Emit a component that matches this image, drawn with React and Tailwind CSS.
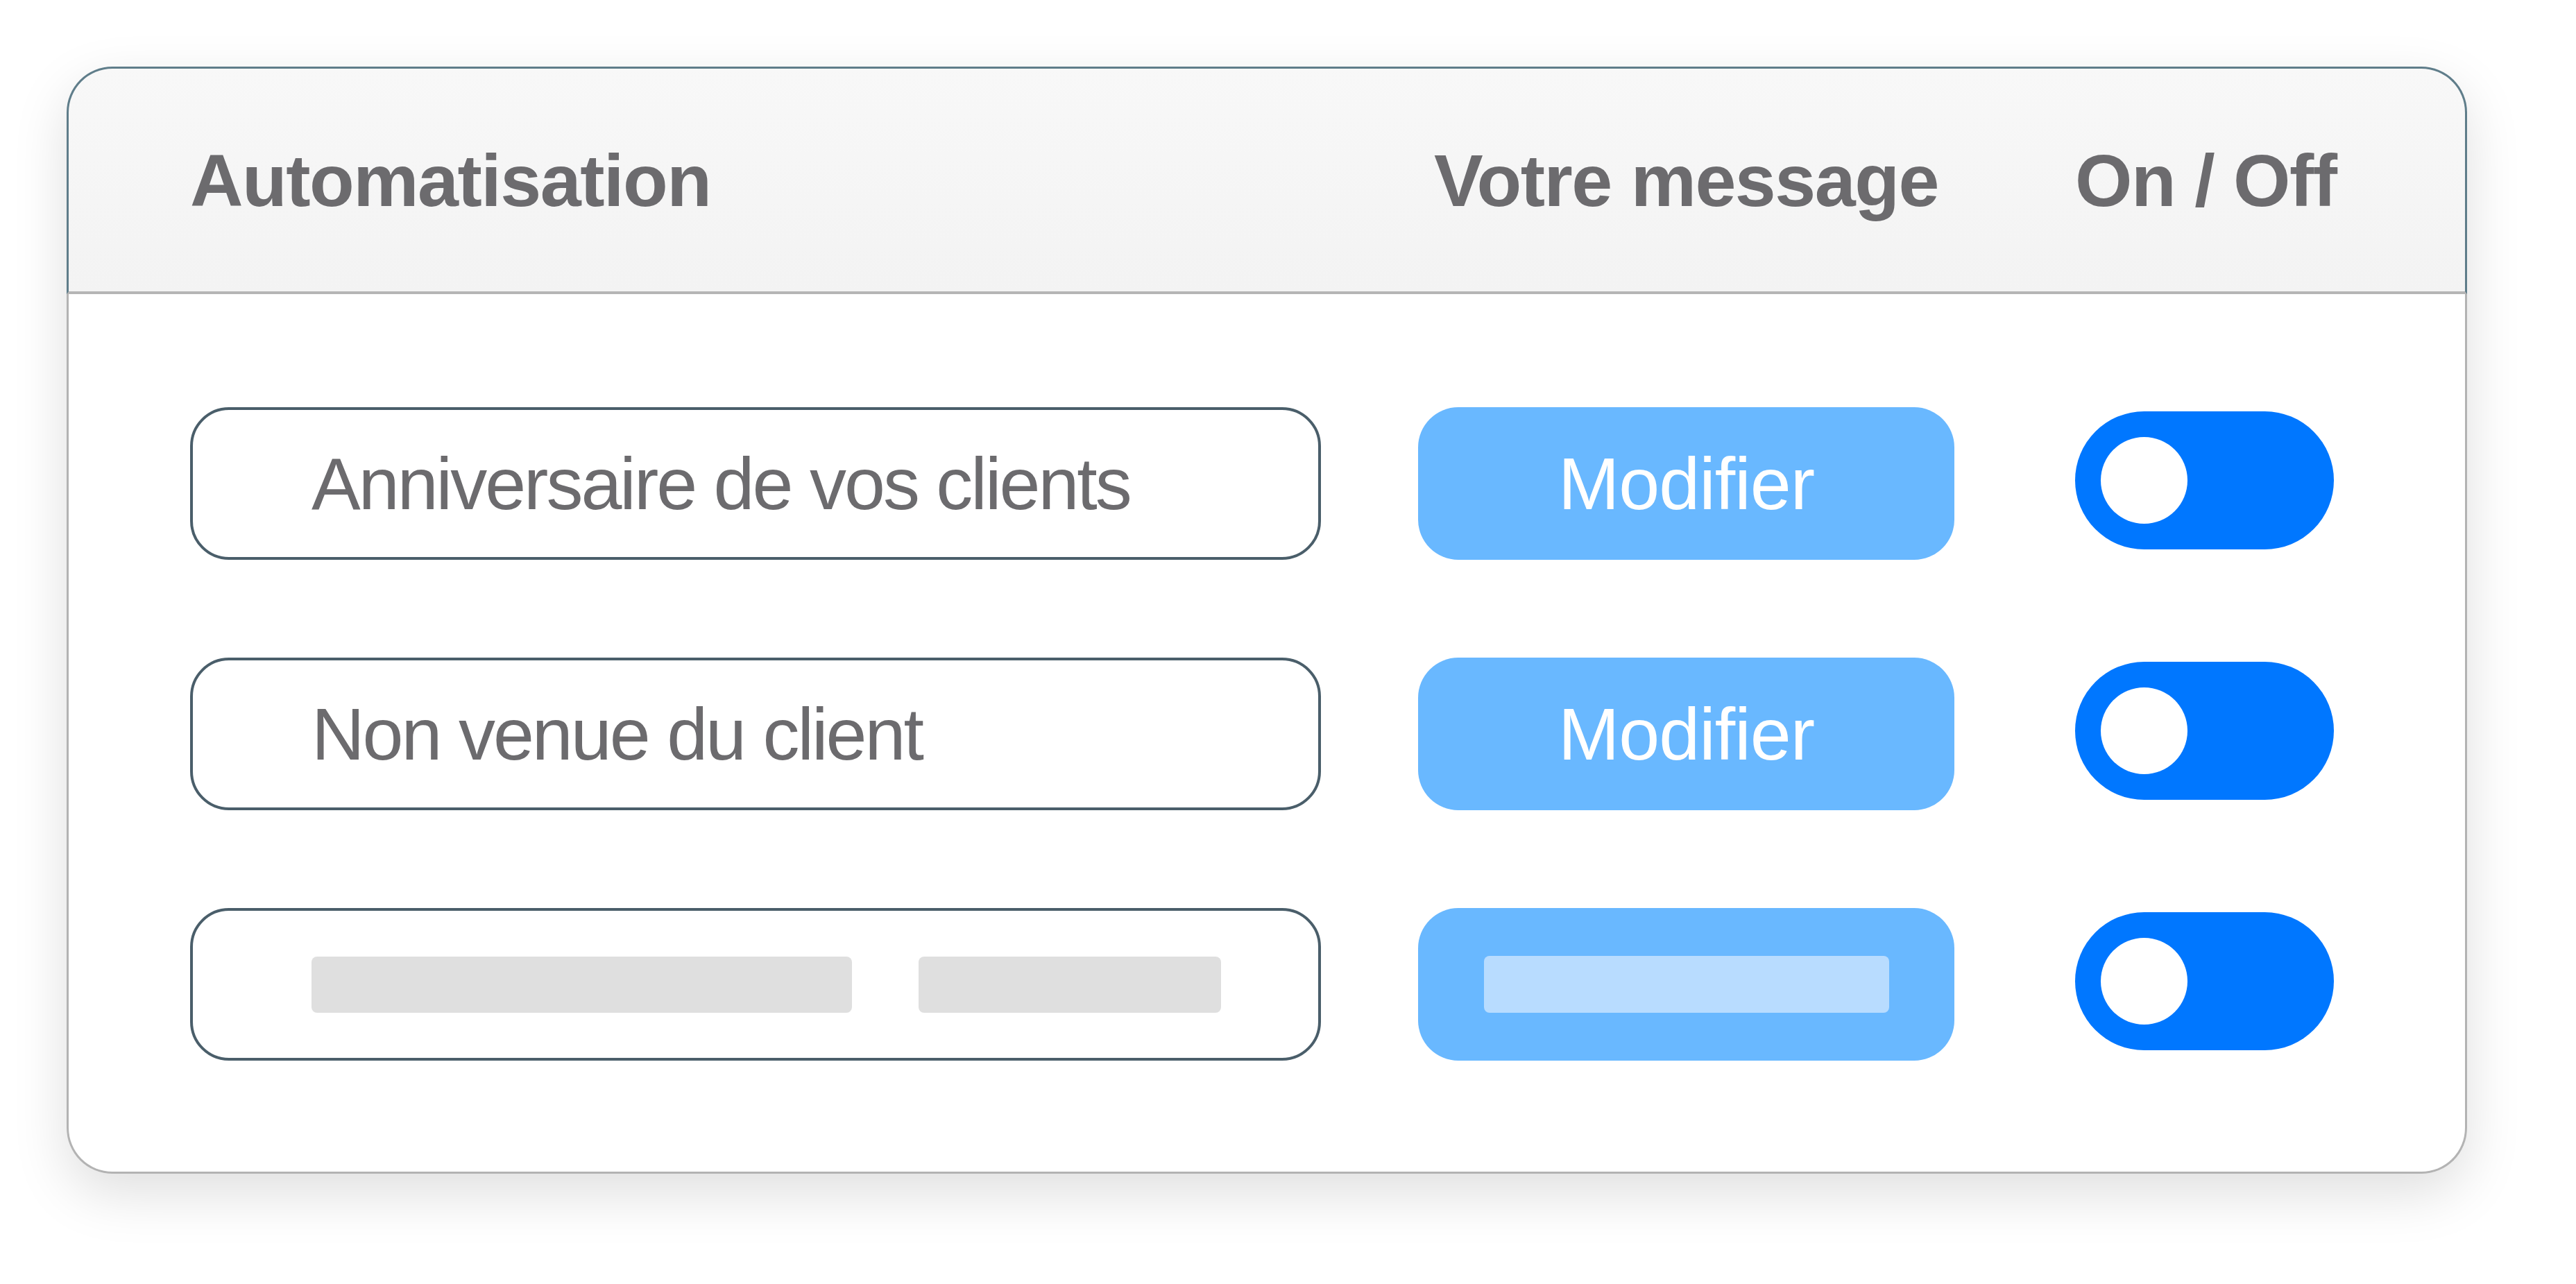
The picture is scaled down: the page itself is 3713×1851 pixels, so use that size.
import React from "react";

const rows = [
  { label: "Anniversaire de vos clients" },
  { label: "Non venue du client" },
  { label: null },
];

const font = { fontFamily: '"Liberation Sans", Arial, sans-serif' };

export default function App() {
  return (
    <div className="min-h-screen w-full bg-white pl-[96px] pt-[96px]" style={font}>
      <div className="w-[3460px] rounded-[66px] shadow-[0_28px_80px_rgba(0,0,0,0.13)]">
        {/* header */}
        <div className="flex h-[328px] items-center whitespace-nowrap rounded-t-[66px] border-x-[3px] border-t-[3px] border-b-[4px] border-x-[#5f7d8a] border-t-[#5f7d8a] border-b-[#b5b5b5] bg-gradient-to-b from-[#f8f8f8] to-[#f3f3f3] pl-[175px] pr-[189px] text-[106px] font-bold tracking-[-1.5px] text-[#6c6b6e]">
          <div className="w-[1630px] leading-none">Automatisation</div>
          <div className="ml-[140px] w-[773px] text-center leading-none">Votre message</div>
          <div className="ml-[174px] w-[373px] text-center leading-none">On / Off</div>
        </div>

        {/* body */}
        <div className="flex flex-col gap-[141px] rounded-b-[66px] border-x-[3px] border-b-[3px] border-[#b3b3b3] bg-white pb-[160px] pl-[175px] pr-[189px] pt-[163px]">
          {rows.map((row, i) => (
            <Row key={i} label={row.label} />
          ))}
        </div>
      </div>
    </div>
  );
}

function Row({ label }) {
  return (
    <div className="flex h-[220px] items-center">
      <div className="flex h-full w-[1630px] items-center rounded-[56px] border-[4px] border-[#4a5e6a] pl-[171px]">
        {label ? (
          <span className="whitespace-nowrap text-[106px] leading-none tracking-[-3px] text-[#6c6b6e]">{label}</span>
        ) : (
          <div className="flex items-center gap-[96px]">
            <div className="h-[81px] w-[779px] rounded-[8px] bg-[#dfdfdf]" />
            <div className="h-[81px] w-[436px] rounded-[8px] bg-[#dfdfdf]" />
          </div>
        )}
      </div>

      <div className="ml-[140px] flex h-full w-[773px] items-center justify-center rounded-[58px] bg-[#69b8ff]">
        {label ? (
          <span className="text-[106px] leading-none tracking-[-1px] text-white">Modifier</span>
        ) : (
          <div className="h-[82px] w-[584px] rounded-[8px] bg-[#b8dcff]" />
        )}
      </div>

      <div className="ml-[174px] mb-[9px] flex h-[199px] w-[373px] items-center rounded-full bg-[#0077ff] pl-[37px]">
        <div className="h-[125px] w-[125px] rounded-full bg-white" />
      </div>
    </div>
  );
}
